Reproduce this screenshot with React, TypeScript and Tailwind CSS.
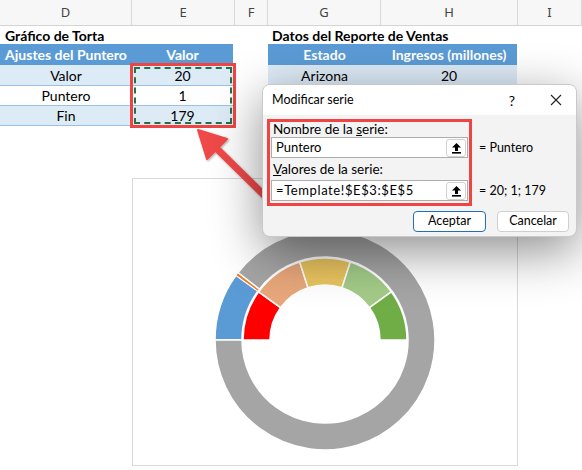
import React from 'react';

const cols = [
  { name: 'D', w: 132 },
  { name: 'E', w: 103 },
  { name: 'F', w: 33 },
  { name: 'G', w: 113 },
  { name: 'H', w: 137 },
  { name: 'I', w: 64 },
];

// donut slice path, angles in degrees (math convention, y up), drawn clockwise from a0 to a1
function slice(r1: number, r2: number, a0: number, a1: number) {
  const p = (r: number, a: number) => {
    const t = (a * Math.PI) / 180;
    return `${(r * Math.cos(t)).toFixed(2)} ${(-r * Math.sin(t)).toFixed(2)}`;
  };
  const large = Math.abs(a0 - a1) > 180 ? 1 : 0;
  return `M ${p(r2, a0)} A ${r2} ${r2} 0 ${large} 1 ${p(r2, a1)} L ${p(r1, a1)} A ${r1} ${r1} 0 ${large} 0 ${p(r1, a0)} Z`;
}

function UploadButton() {
  return (
    <div className="flex h-[18px] w-[20px] items-center justify-center rounded-[3px] border border-[#d0d0d0] bg-white">
      <svg width="11" height="12" viewBox="0 0 11 12">
        <path d="M5.5 1 L10 5.5 L7 5.5 L7 9 L4 9 L4 5.5 L1 5.5 Z" fill="#000" />
        <rect x="1" y="10" width="9" height="1.6" fill="#000" />
      </svg>
    </div>
  );
}

function Gauge() {
  const inner = [
    { a0: 180, a1: 144, c: '#ff0000' },
    { a0: 144, a1: 108, c: '#e8a77b' },
    { a0: 108, a1: 72, c: '#e9c45f' },
    { a0: 72, a1: 36, c: '#a3cb88' },
    { a0: 36, a1: 0, c: '#70ad47' },
  ];
  return (
    <svg width="385" height="287" viewBox="-192 -161 385 287">
      <path d={slice(83, 110, 180, 144)} fill="#5b9bd5" stroke="#fff" strokeWidth="1.5" />
      <path d={slice(83, 110, 144, 142.2)} fill="#ed7d31" stroke="#fff" strokeWidth="1" />
      <path d={slice(83, 110, 142.2, -180)} fill="#a5a5a5" stroke="#fff" strokeWidth="1.5" />
      {inner.map((s) => (
        <path key={s.c} d={slice(55, 82, s.a0, s.a1)} fill={s.c} stroke="#fff" strokeWidth="1.5" />
      ))}
    </svg>
  );
}

export default function App() {
  const cell = "flex items-center justify-center text-[14px] text-black";
  return (
    <div className="relative h-[470px] w-[582px] overflow-hidden bg-white" style={{ fontFamily: 'Lato, "Liberation Sans", sans-serif' }}>
      {/* column headers */}
      <div className="flex h-[26px] border-b border-[#d4d4d4] bg-[#f7f7f7]">
        {cols.map((c) => (
          <div
            key={c.name}
            className="flex shrink-0 items-center justify-center border-r border-[#d9d9d9] text-[13px] text-[#444]"
            style={{ width: c.w, fontFamily: '"Noto Sans", sans-serif' }}
          >
            {c.name}
          </div>
        ))}
      </div>

      {/* titles */}
      <div className="flex h-[18px] items-center">
        <div className="w-[268px] pl-[5px] text-[14px] font-bold">Gráfico de Torta</div>
        <div className="pl-[4px] text-[14px] font-bold">Datos del Reporte de Ventas</div>
      </div>

      {/* tables */}
      <div className="flex items-start">
        <div className="w-[233px] border-b border-[#9bc2e6]">
          <div className="flex h-[21px] bg-[#5b9bd5] font-bold text-white">
            <div className={`${cell} w-[132px] !text-white`}>Ajustes del Puntero</div>
            <div className={`${cell} flex-1 !text-white`}>Valor</div>
          </div>
          <div className="flex h-[21px] border-b border-[#9bc2e6] bg-[#ddebf7]">
            <div className={`${cell} w-[132px]`}>Valor</div>
            <div className={`${cell} flex-1`}>20</div>
          </div>
          <div className="flex h-[20px] border-b border-[#9bc2e6] bg-white">
            <div className={`${cell} w-[132px]`}>Puntero</div>
            <div className={`${cell} flex-1`}>1</div>
          </div>
          <div className="flex h-[19px] bg-[#ddebf7]">
            <div className={`${cell} w-[132px]`}>Fin</div>
            <div className={`${cell} flex-1`}>179</div>
          </div>
        </div>
        <div className="ml-[35px] w-[249px] border-b border-[#9bc2e6]">
          <div className="flex h-[21px] bg-[#5b9bd5] font-bold">
            <div className={`${cell} w-[113px] !text-white`}>Estado</div>
            <div className={`${cell} flex-1 !text-white`}>Ingresos (millones)</div>
          </div>
          <div className="flex h-[20px] bg-[#ddebf7]">
            <div className={`${cell} w-[113px]`}>Arizona</div>
            <div className={`${cell} flex-1`}>20</div>
          </div>
        </div>
      </div>

      {/* chart object */}
      <div className="ml-[132px] mt-[52px] h-[288px] w-[386px] border border-[#d9d9d9] bg-white">
        <Gauge />
      </div>

      {/* selected range marker */}
      <div className="absolute left-[130px] top-[63px] h-[65px] w-[106px] border-[3px] border-[#f04444] p-[1px]">
        <div className="h-full w-full border-2 border-dashed border-[#217346]" />
      </div>

      {/* arrow */}
      <svg className="absolute left-[185px] top-[120px]" width="90" height="90" viewBox="185 120 90 90">
        <defs>
          <filter id="sh" x="-20%" y="-20%" width="140%" height="140%">
            <feDropShadow dx="1" dy="1" stdDeviation="1" floodOpacity="0.35" />
          </filter>
        </defs>
        <g filter="url(#sh)">
          <line x1="266" y1="197" x2="214" y2="146" stroke="#f04848" strokeWidth="7" strokeLinecap="round" />
          <path d="M198 130 L227 139 L207 159 Z" fill="#f04848" stroke="#f04848" strokeWidth="2" strokeLinejoin="round" />
        </g>
      </svg>

      {/* dialog */}
      <div
        className="absolute left-[262px] top-[84px] w-[315px] overflow-hidden rounded-[8px] border border-[#c9c9c9] bg-[#f3f3f3] shadow-[0_14px_50px_rgba(0,0,0,0.45)]"
        style={{ fontFamily: 'Lato, "Noto Sans", sans-serif' }}
      >
        <div className="flex h-[30px] items-center bg-white pl-[9px] pr-[14px] text-[12.5px] text-black">
          <span className="flex-1">Modificar serie</span>
          <span className="mr-[35px] text-[14px]">?</span>
          <svg width="12" height="12" viewBox="0 0 12 12">
            <path d="M1 1 L11 11 M11 1 L1 11" stroke="#222" strokeWidth="1.1" />
          </svg>
        </div>
        <div className="px-[4px] pb-[4px] pt-[4px]">
          <div className="flex items-start">
            <div className="w-[205px] border-[3px] border-[#f04444] px-[1px] pb-[2px]">
              <div className="h-[15px] pl-[2px] text-[13.5px] leading-[15px]">
                Nombre de la <span className="underline">s</span>erie:
              </div>
              <div className="flex h-[21px] items-center border border-[#adadad] bg-white pl-[4px] pr-[1px] text-[13px]">
                <span className="flex-1">Puntero</span>
                <UploadButton />
              </div>
              <div className="h-[22px] pl-[2px] text-[13.5px] leading-[22px]">
                <span className="underline">V</span>alores de la serie:
              </div>
              <div className="flex h-[21px] items-center border border-[#adadad] bg-white pl-[4px] pr-[1px] text-[13px]">
                <span className="flex-1 tracking-[0.6px]">=Template!$E$3:$E$5</span>
                <UploadButton />
              </div>
            </div>
            <div className="ml-[7px] flex flex-col text-[12.5px]">
              <span className="mt-[18px] leading-[21px]">= Puntero</span>
              <span className="mt-[22px] leading-[21px]">= 20; 1; 179</span>
            </div>
          </div>
          <div className="mt-[5px] flex justify-end gap-[11px] pr-[3px] text-[12.5px]">
            <button className="h-[21px] w-[73px] rounded-[4px] border border-[#1f6fbf] bg-white">Aceptar</button>
            <button className="h-[21px] w-[72px] rounded-[4px] border border-[#cfcfcf] bg-white">Cancelar</button>
          </div>
        </div>
      </div>
    </div>
  );
}
